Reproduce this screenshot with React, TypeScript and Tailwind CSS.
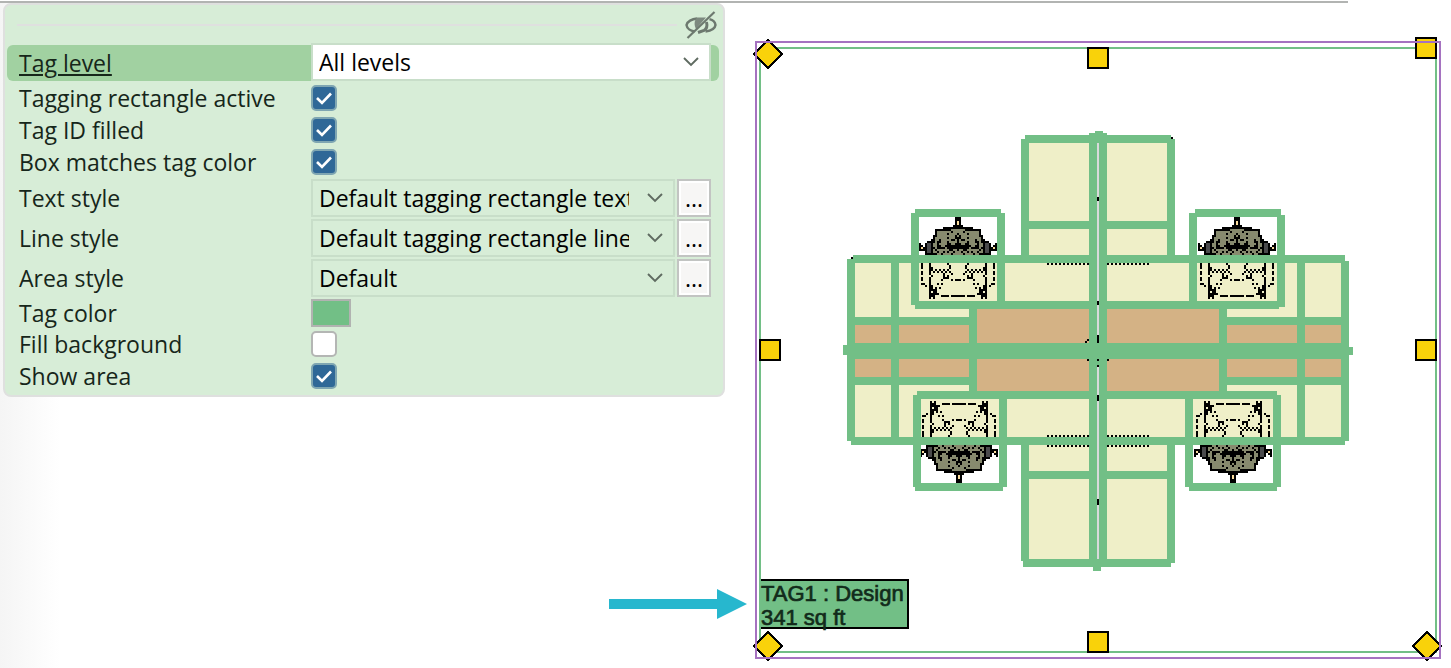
import React from "react";

const LABEL_COLOR = "text-[#16261a]";

function Chevron() {
  return (
    <svg
      className="pointer-events-none absolute right-3 top-1/2 -translate-y-1/2"
      width="16"
      height="10"
      viewBox="0 0 16 10"
      fill="none"
      stroke="#5f6b61"
      strokeWidth="1.900"
      aria-hidden="true"
    >
      <path d="M1 1 8 8l7-7" />
    </svg>
  );
}

function HiddenEyeIcon() {
  return (
    <svg width="32" height="28" viewBox="0 0 32 28" fill="none" stroke="#6d796f" aria-hidden="true">
      <path d="M12 7.500C7 8 2 10.500 1.500 14c.500 3.500 4 6 8 6.500" strokeWidth="2.400" />
      <path d="M20.500 20.500c5-.700 9.500-3 10-6.500-.300-2.800-3-5-6-5.800" strokeWidth="2.400" />
      <path d="M12 6.500h9L11 18c-2-4-2-8.500 1-11.500Z" fill="#7d897f" stroke="none" />
      <path d="M21.500 11c1 4 0 7-2.500 8.500l-6 2" strokeWidth="3" />
      <path d="M29.500 1 2.500 27" strokeWidth="2.200" />
    </svg>
  );
}

function Row({
  id,
  label,
  height,
  selected,
  children,
}: {
  id: string;
  label: string;
  height: string;
  selected?: boolean;
  children: React.ReactNode;
}) {
  return (
    <div
      className={`flex ${height} pl-3 pr-2 ${
        selected ? "mb-px items-end rounded-md bg-[#a1d1a1]" : "items-center"
      }`}
    >
      <label
        htmlFor={id}
        className={`w-[292px] shrink-0 whitespace-nowrap ${LABEL_COLOR} ${
          selected ? "self-center underline decoration-2 underline-offset-2" : ""
        }`}
      >
        {label}
      </label>
      {children}
    </div>
  );
}

function Select({ id, value, white }: { id: string; value: string; white?: boolean }) {
  return (
    <div className="relative min-w-0 flex-1">
      <select
        id={id}
        className={`block h-[38px] w-full appearance-none border-2 border-[#c8dec9] pl-1.5 text-black outline-none ${
          white ? "bg-white" : "bg-[#d7edd7]"
        } pr-11`}
      >
        <option>{value}</option>
      </select>
      <Chevron />
    </div>
  );
}

function StyleRow({ id, label, value }: { id: string; label: string; value: string }) {
  return (
    <Row id={id} label={label} height="h-10">
      <Select id={id} value={value} />
      <button
        type="button"
        aria-label={`Edit ${label.toLowerCase()}`}
        className="ml-0.5 h-[38px] w-[34px] shrink-0 border-2 border-[#c2c4c2] bg-[#f7f6f5] leading-8 text-black inset-ring-2 inset-ring-white"
      >
        ...
      </button>
    </Row>
  );
}

function CheckRow({ id, label, checked }: { id: string; label: string; checked?: boolean }) {
  return (
    <Row id={id} label={label} height="h-8">
      <span className="relative flex">
        <input
          id={id}
          type="checkbox"
          defaultChecked={checked}
          className="peer size-[26px] appearance-none rounded-[5px] border-2 border-[#b4b6b4] bg-white checked:border-[#7fa6b2] checked:bg-[#2f6897]"
        />
        <svg
          className="pointer-events-none absolute inset-0 hidden peer-checked:block"
          width="26"
          height="26"
          viewBox="0 0 26 26"
          fill="none"
          stroke="#fff"
          strokeWidth="2.600"
          aria-hidden="true"
        >
          <path d="m6 13 5 5 9-9.500" />
        </svg>
      </span>
    </Row>
  );
}

function TagPanel() {
  return (
    <section className="ml-[3px] mr-7 rounded-[8px] border-2 border-[#dfe0df] bg-[#d7edd7] pb-[3px] pl-0.5 pr-1">
      <div className="flex h-10 items-center pl-2.5">
        <div className="h-0.5 flex-1 bg-[#dfe0df]" />
        <button type="button" aria-label="Hide" className="ml-2 mr-0.5">
          <HiddenEyeIcon />
        </button>
      </div>
      <Row id="level" label="Tag level" height="h-9" selected>
        <Select id="level" value="All levels" white />
      </Row>
      <CheckRow id="active" label="Tagging rectangle active" checked />
      <CheckRow id="filled" label="Tag ID filled" checked />
      <CheckRow id="match" label="Box matches tag color" checked />
      <StyleRow id="text-style" label="Text style" value="Default tagging rectangle text" />
      <StyleRow id="line-style" label="Line style" value="Default tagging rectangle line" />
      <StyleRow id="area-style" label="Area style" value="Default" />
      <Row id="color" label="Tag color" height="h-[30px]">
        <button id="color" type="button" className="h-7 w-10 border-2 border-[#b1b3b1] bg-[#72bf86]" />
      </Row>
      <CheckRow id="background" label="Fill background" />
      <CheckRow id="area" label="Show area" checked />
    </section>
  );
}

/* Left half of the chair symbol, centre column last; the right half mirrors it.
   # outline, o upholstery, g shadow, y highlight */
const CHAIR = [
  "..................##",
  "..................##",
  "..................#y",
  "..................#y",
  ".................###",
  "............########",
  "........########oooo",
  "........#ooooooo#ooo",
  "........#ooooo#oooo#",
  ".......##ooooooooo#o",
  ".......#oooooo#ooo##",
  "......##oo#ooooo##o#",
  "....####o##ooo#oooo#",
  "#..#gg#oo#oooo##oo##",
  "##.#gg#oo##oo#######",
  "#y##gg##o####o######",
  "####gg#o#oooooo##oo#",
  "...#gg#oo#oo#o#oo#oo",
  "...######oo#oooo#ooo",
  "....................",
  "....................",
  "....................",
  "....................",
  ".#...#........#.....",
  ".#...#.........#....",
  ".#...##........#....",
  ".....##.#.#.#.#.....",
  ".#...#.#.#.#.#.#....",
  ".#...#......#...#...",
  "......#.....#.#.....",
  ".#...#......###.....",
  ".#...#.....#....#.##",
  ".....#..............",
  ".##..#...#.#........",
  "...#.##.............",
  ".....##.#.#.........",
  ".....####...........",
  ".....#.##...........",
  ".....#####..........",
  ".....###...####.####",
  ".....#.#............",
  "....................",
];

function pixels(symbol: string) {
  let d = "";
  CHAIR.forEach((half, y) => {
    const line = half + half.slice(0, 19).split("").reverse().join("");
    line.split("").forEach((c, x) => {
      if (c === symbol) d += `M${x * 2} ${y * 2}h2v2h-2z`;
    });
  });
  return d;
}

const CHAIR_LAYERS = [
  { fill: "#878a6e", d: pixels("o") },
  { fill: "#4a4a4c", d: pixels("g") },
  { fill: "#fbdc9c", d: pixels("y") },
  { fill: "#000", d: pixels("#") },
];

function Chair({ x, y, flip }: { x: number; y: number; flip?: boolean }) {
  return (
    <g transform={flip ? `translate(${x} ${y + 84}) scale(1 -1)` : `translate(${x} ${y})`}>
      {CHAIR_LAYERS.map((l) => (
        <path key={l.fill} d={l.d} fill={l.fill} />
      ))}
    </g>
  );
}

type Box = [number, number, number, number];

const CREAM: Box[] = [
  [855, 261, 488, 178],
  [1027, 141, 142, 118],
  [1027, 441, 142, 120],
];
const WOOD: Box[] = [
  [855, 325, 486, 54],
  [977, 307, 242, 86],
];
/* x, y, width, height of every 8-unit tag outline segment */
const OUTLINE: Box[] = [
  [853, 255, 492, 8],
  [851, 437, 494, 8],
  [847, 259, 8, 182],
  [1341, 261, 8, 180],
  [891, 259, 8, 182],
  [1297, 259, 8, 182],
  [847, 317, 128, 8],
  [847, 377, 128, 8],
  [1221, 317, 126, 8],
  [1221, 377, 126, 8],
  [847, 343, 502, 16],
  [843, 345, 10, 10],
  [1343, 347, 10, 8],
  [969, 303, 8, 92],
  [1219, 303, 8, 92],
  [915, 301, 364, 8],
  [917, 391, 360, 8],
  [1021, 139, 8, 120],
  [1167, 139, 8, 120],
  [1025, 135, 146, 8],
  [1025, 221, 146, 8],
  [1021, 441, 8, 120],
  [1167, 441, 8, 122],
  [1025, 471, 146, 8],
  [1023, 559, 148, 8],
  [911, 213, 8, 92],
  [997, 213, 8, 92],
  [915, 209, 86, 8],
  [1189, 213, 8, 92],
  [1277, 215, 8, 92],
  [1195, 209, 86, 8],
  [913, 395, 8, 92],
  [999, 395, 8, 92],
  [915, 483, 88, 8],
  [1185, 395, 8, 92],
  [1273, 395, 8, 92],
  [1189, 483, 88, 8],
  [1089, 133, 18, 434],
  [1095, 131, 8, 8],
  [1093, 563, 8, 8],
];

function Boxes({ items, fill }: { items: Box[]; fill: string }) {
  return (
    <g fill={fill}>
      {items.map(([x, y, w, h]) => (
        <rect key={`${x}-${y}-${w}`} x={x} y={y} width={w} height={h} />
      ))}
    </g>
  );
}

const SQUARES = [
  [1098, 58],
  [1426, 48],
  [770, 350],
  [1426, 350],
  [1098, 642],
];
const DIAMONDS = [
  [768, 54],
  [768, 646],
  [1427, 646],
];

function FloorPlan() {
  return (
    <svg
      viewBox="753 3 698 665"
      className="block w-full"
      shapeRendering="crispEdges"
      role="img"
      aria-label="Tagged workstation group"
    >
      <rect x="760" y="48" width="676" height="604" fill="none" stroke="#72bf86" strokeWidth="2" />
      <Boxes items={CREAM} fill="#efefc8" />
      <Boxes items={WOOD} fill="#d4b285" />
      <path d="M1047 264h42M1107 264h42M1047 436h42M1107 436h42M1047 446h42M1107 446h42" stroke="#000" strokeWidth="2" strokeDasharray="2 2" />
      <Chair x={919} y={217} />
      <Chair x={1198} y={217} />
      <Chair x={920} y={399} flip />
      <Chair x={1194} y={399} flip />
      <Boxes items={OUTLINE} fill="#72bf86" />
      <path d="M1085 341h2v-2h2v2h-2v2h-2zM1107 359h2v2h-2zM1087 359h2v2h-2zM851 257h2v2h-2zM1171 137h2v2h-2z" fill="#000" />
      <path d="M1098 143v200M1098 367v192" stroke="#d9dadb" strokeWidth="2" />
      <path d="M1098 197v4M1098 301v4M1098 335v8M1098 359v2M1098 365v2M1098 395v6M1098 499v6" stroke="#000" strokeWidth="2" />

      <g fill="#f9d20a" stroke="#000" strokeWidth="2">
        {SQUARES.map(([x, y]) => (
          <rect key={`${x}-${y}`} x={x - 10} y={y - 10} width="20" height="20" />
        ))}
        {DIAMONDS.map(([x, y]) => (
          <path key={`${x}-${y}`} d={`M${x} ${y - 14}l14 14l-14 14l-14-14z`} />
        ))}
      </g>
      <rect x="756" y="42" width="684" height="616" fill="none" stroke="#a572c0" strokeWidth="2" />

      <rect x="761" y="579" width="147" height="50" fill="#72bf86" />
      <path d="M761 580h147v48H761" fill="none" stroke="#000" strokeWidth="2" />
      <g fill="#122b1b" stroke="#122b1b" strokeWidth="0.700" fontFamily="'Liberation Sans', sans-serif" fontSize="22">
        <text x="761" y="601">TAG1 : Design</text>
        <text x="761" y="625">341 sq ft</text>
      </g>
    </svg>
  );
}

export default function App() {
  return (
    <main className="font-['Open_Sans',sans-serif] text-[23px] leading-8">
      <div className="mr-[103px] border-t border-white">
        <div className="h-0.5 bg-[#b2b4b2]" />
      </div>
      <div className="grid grid-cols-[753fr_698fr]">
        <div className="flex flex-col bg-[linear-gradient(to_right,#f5f5f5,#fff_60px)]">
          <TagPanel />
          <svg className="mr-1.5 mt-[192px] self-end" width="138" height="30" viewBox="0 0 138 30" aria-hidden="true">
            <path d="M0 10h108V0l30 15-30 15V20H0z" fill="#27b7ce" />
          </svg>
        </div>
        <FloorPlan />
      </div>
    </main>
  );
}
